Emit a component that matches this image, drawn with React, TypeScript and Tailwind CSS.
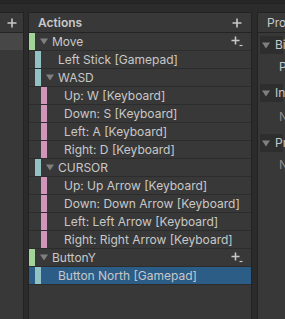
import React from "react";

type Row = {
  label: string;
  level: 0 | 1 | 2;
  expandable?: boolean;
  addMenu?: boolean;
  selected?: boolean;
};

const rows: Row[] = [
  { label: "Move", level: 0, expandable: true, addMenu: true },
  { label: "Left Stick [Gamepad]", level: 1 },
  { label: "WASD", level: 1, expandable: true },
  { label: "Up: W [Keyboard]", level: 2 },
  { label: "Down: S [Keyboard]", level: 2 },
  { label: "Left: A [Keyboard]", level: 2 },
  { label: "Right: D [Keyboard]", level: 2 },
  { label: "CURSOR", level: 1, expandable: true },
  { label: "Up: Up Arrow [Keyboard]", level: 2 },
  { label: "Down: Down Arrow [Keyboard]", level: 2 },
  { label: "Left: Left Arrow [Keyboard]", level: 2 },
  { label: "Right: Right Arrow [Keyboard]", level: 2 },
  { label: "ButtonY", level: 0, expandable: true, addMenu: true },
  { label: "Button North [Gamepad]", level: 1, selected: true },
];

const barColor = ["bg-[#a2d497]", "bg-[#93c2c4]", "bg-[#cf96b9]"];
const barOffset = ["ml-0", "ml-[6px]", "ml-[12px]"];

const Plus = () => (
  <svg width="10" height="10" viewBox="0 0 10 10" className="shrink-0 text-[#c8c8c8]">
    <path d="M5 0.5v9M0.5 5h9" stroke="currentColor" strokeWidth="1.6" />
  </svg>
);

const PlusMenu = () => (
  <svg width="12" height="11" viewBox="0 0 12 11" className="shrink-0 text-[#c8c8c8]">
    <path d="M4.5 0.5v8M0.5 4.5h8" stroke="currentColor" strokeWidth="1.6" />
    <path d="M8.5 9.5h3" stroke="currentColor" strokeWidth="1.2" />
  </svg>
);

const Caret = () => (
  <svg width="8" height="7" viewBox="0 0 8 7" className="shrink-0 text-[#7f7f7f]">
    <path d="M0 0.5h8L4 6.5z" fill="currentColor" />
  </svg>
);

const TreeRow = ({ row }: { row: Row }) => (
  <div
    className={`flex h-[18px] items-stretch border-b border-[#2c2c2c] ${
      row.selected ? "bg-[#2c5d87]" : ""
    }`}
  >
    <div className={`w-[6px] shrink-0 ${barOffset[row.level]} ${barColor[row.level]}`} />
    <div className="ml-[5px] flex w-[12px] shrink-0 items-center">
      {row.expandable && <Caret />}
    </div>
    <span className="flex-1 truncate leading-[17px] text-[#c8c8c8]">{row.label}</span>
    {row.addMenu && (
      <div className="flex items-center pr-[8px]">
        <PlusMenu />
      </div>
    )}
  </div>
);

const Section = ({ label }: { label: string }) => (
  <div className="mx-[2px] flex h-[18px] items-center gap-[5px] bg-[#2e2e2e] pl-[2px]">
    <Caret />
    <span className="text-[#c8c8c8]">{label}</span>
  </div>
);

export default function App() {
  return (
    <div className="flex h-[319px] w-[285px] flex-col overflow-hidden bg-[#2b2b2b] font-['Inter',sans-serif] text-[12px]">
      <div className="h-[4px] border-b border-[#232323] bg-[#262626]" />
      <div className="flex flex-1 pt-[8px]">
        {/* action maps */}
        <div className="flex w-[24px] shrink-0 flex-col border-r border-t border-[#222222] bg-[#383838]">
          <div className="flex h-[20px] items-center justify-center border-b border-[#242424]">
            <Plus />
          </div>
          <div className="h-[17px] bg-[#474747]" />
        </div>

        {/* actions */}
        <div className="ml-[4px] flex w-[224px] shrink-0 flex-col border-x border-t border-[#222222] bg-[#383838]">
          <div className="flex h-[20px] items-center justify-between border-b border-[#242424] pl-[9px] pr-[9px]">
            <span className="font-semibold text-[#c8c8c8]">Actions</span>
            <Plus />
          </div>
          {rows.map((r) => (
            <TreeRow key={r.label} row={r} />
          ))}
        </div>

        {/* properties */}
        <div className="ml-[5px] flex flex-1 flex-col overflow-hidden border-l border-t border-[#222222] bg-[#383838] whitespace-nowrap">
          <div className="flex h-[20px] items-center border-b border-[#242424] pl-[9px]">
            <span className="text-[#c8c8c8]">Properties</span>
          </div>
          <div className="mt-[3px]">
            <Section label="Binding" />
          </div>
          <div className="h-[30px] pl-[21px] leading-[26px] text-[#c8c8c8]">Path</div>
          <Section label="Interactions" />
          <div className="h-[32px] pl-[21px] leading-[30px] text-[#8a8a8a]">No Interactions</div>
          <Section label="Processors" />
          <div className="pl-[21px] leading-[26px] text-[#8a8a8a]">No Processors</div>
        </div>
      </div>
    </div>
  );
}
